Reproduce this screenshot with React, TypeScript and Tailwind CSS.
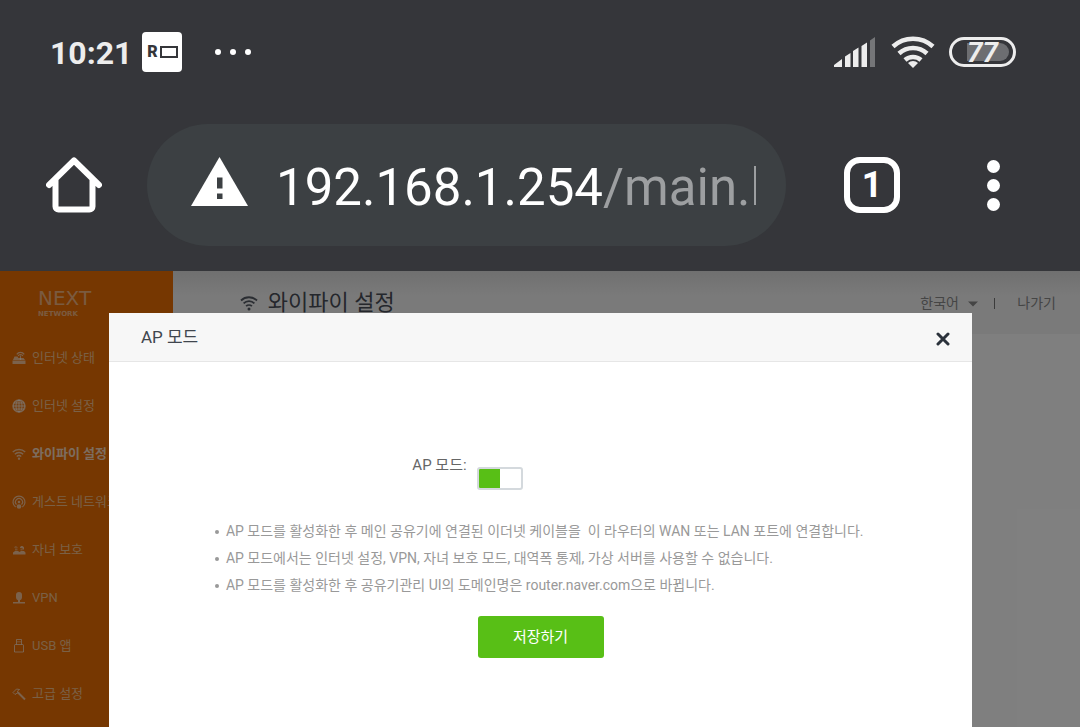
import { useState } from "react";
import type { ReactNode } from "react";

const menu: { label: string; icon: ReactNode; active?: boolean }[] = [
  { label: "인터넷 상태", icon: <RouterIcon /> },
  { label: "인터넷 설정", icon: <GlobeIcon /> },
  { label: "와이파이 설정", icon: <WifiIcon className="size-3.5" />, active: true },
  { label: "게스트 네트워크", icon: <GuestIcon /> },
  { label: "자녀 보호", icon: <FamilyIcon /> },
  { label: "VPN", icon: <VpnIcon /> },
  { label: "USB 앱", icon: <UsbIcon /> },
  { label: "고급 설정", icon: <HammerIcon /> },
];

const notes = [
  "AP 모드를 활성화한 후 메인 공유기에 연결된 이더넷 케이블을\u00a0 이 라우터의 WAN 또는 LAN 포트에 연결합니다.",
  "AP 모드에서는 인터넷 설정, VPN, 자녀 보호 모드, 대역폭 통제, 가상 서버를 사용할 수 없습니다.",
  "AP 모드를 활성화한 후 공유기관리 UI의 도메인명은 router.naver.com으로 바뀝니다.",
];

function RouterIcon() {
  return (
    <svg viewBox="0 0 14 14" className="size-3.5" fill="none" stroke="currentColor">
      <path d="M.5 9.500h13V13H.5z" fill="currentColor" stroke="none" />
      <path d="M8.500 9V4.500M6.200 5a2.500 2.500 0 0 1 4.600 0M4.800 3.400a4.300 4.300 0 0 1 7.400 0" strokeWidth="1.200" />
      <path d="M1 9 2.500 5.500h3L6.500 7h5L13 9z" fill="currentColor" stroke="none" />
    </svg>
  );
}

function GlobeIcon() {
  return (
    <svg viewBox="0 0 14 14" className="size-3.5" fill="none" stroke="currentColor">
      <circle cx="7" cy="7" r="6" strokeWidth="1.5" fill="currentColor" fillOpacity=".25" />
      <ellipse cx="7" cy="7" rx="3" ry="6" />
      <path d="M7 1v12M1 7h12M2 4h10M2 10h10" />
    </svg>
  );
}

function WifiIcon({ className }: { className: string }) {
  return (
    <svg viewBox="0 0 18 18" className={className} fill="none" stroke="currentColor" strokeWidth="1.800">
      <path d="M1 6.500a11.500 11.500 0 0 1 16 0M3.600 9.400a7.600 7.600 0 0 1 10.800 0M6.100 12.200a4.200 4.200 0 0 1 5.800 0" />
      <circle cx="9" cy="15" r="1.500" fill="currentColor" stroke="none" />
    </svg>
  );
}

function GuestIcon() {
  return (
    <svg viewBox="0 0 14 14" className="size-3.5" fill="none" stroke="currentColor">
      <path d="M3.600 12a6 6 0 1 1 6.800 0M4.500 9.500a3.500 3.500 0 1 1 5 0" strokeWidth="1.200" />
      <circle cx="7" cy="7" r="1.300" fill="currentColor" stroke="none" />
      <circle cx="7" cy="11.500" r="2.300" fill="currentColor" stroke="none" />
    </svg>
  );
}

function FamilyIcon() {
  return (
    <svg viewBox="0 0 14 14" className="size-3.5" fill="currentColor">
      <path d="M2 4.500C2.500 3 5 3 6 4.500H2zM8 4.500C8.500 2.500 11 2.500 12 4.500v2h-1.500V5H8z" />
      <path d="M1 11.500V9.500L3 8h3l1.500 1L9 8h3l1.500 1.500v2z" />
      <path d="M3 5.500h2.500v2H3zM8.500 5.500h2v2h-2z" opacity=".6" />
    </svg>
  );
}

function VpnIcon() {
  return (
    <svg viewBox="0 0 14 14" className="size-3.5" fill="currentColor">
      <path d="M7 1a3 3 0 0 1 3 3v2.500a3 3 0 0 1-2 2.800V11h5v1.500H1V11h5V9.300a3 3 0 0 1-2-2.800V4a3 3 0 0 1 3-3z" />
    </svg>
  );
}

function UsbIcon() {
  return (
    <svg viewBox="0 0 14 14" className="size-3.5" fill="none" stroke="currentColor">
      <path d="M4.500 5.500v-5h5v5M2.500 6.500a1 1 0 0 1 1-1h7a1 1 0 0 1 1 1V13h-9zM6 2v1.500M8 2v1.500" />
    </svg>
  );
}

function HammerIcon() {
  return (
    <svg viewBox="0 0 14 14" className="size-3.5" fill="none" stroke="currentColor">
      <path d="M1 5.500 4.500 2 7.500 2.500 5.500 4 6 5.500 3 7.500z" />
      <path d="m6 5.500 7 7" strokeWidth="2" />
    </svg>
  );
}

function StatusBar() {
  return (
    <div className="flex h-[104px] items-center pr-16 pl-[50px] text-[#ededed]">
      <span className="pt-0.5 text-[32px] leading-10 font-bold">10:21</span>
      <span className="ml-[10px] flex size-10 items-center justify-center gap-0.5 rounded bg-white text-[#35363a]">
        <span className="text-base font-black">R</span>
        <span className="h-3 w-[18px] border-2 border-[#35363a]" />
      </span>
      <span className="ml-[33px] flex gap-[9px]">
        <i className="size-1.5 rounded-full bg-white" />
        <i className="size-1.5 rounded-full bg-white" />
        <i className="size-1.5 rounded-full bg-white" />
      </span>
      <svg viewBox="0 0 42 30" className="ml-auto h-[30px] w-[42px]" fill="currentColor">
        <path d="M0 30v-2l8-6v8zM11 30V19.500l5.500-3.500v14zM19 30V14l5.500-3.500V30zM27.500 30V9L33 5.500V30z" />
        <path d="M36 30V3.500L41 0v30z" opacity=".35" />
      </svg>
      <svg viewBox="0 0 44 32" className="ml-[15px] h-8 w-11" fill="none" stroke="currentColor" strokeWidth="4.500">
        <path d="M2 10.500a29.500 29.500 0 0 1 40 0M8 17.500a20.500 20.500 0 0 1 28 0M14 24a12 12 0 0 1 16 0" />
        <path d="M22 32 17 27a7 7 0 0 1 10 0z" fill="currentColor" stroke="none" />
      </svg>
      <span className="ml-[14px] flex h-[30px] w-[67px] items-center rounded-full border-3 border-current p-1">
        <span className="ml-[11px] flex h-[18px] flex-1 items-center rounded-r-full bg-[#6d6e71] pt-0.5">
          <span className="text-[28px] font-bold italic">77</span>
        </span>
      </span>
    </div>
  );
}

function Toolbar() {
  return (
    <div className="flex items-center pt-5 pr-20 pb-[25px] pl-[46px] text-white">
      <button type="button" aria-label="Home" className="shrink-0">
        <svg viewBox="0 0 56 56" className="size-14" fill="none" stroke="currentColor" strokeWidth="6" strokeLinecap="round" strokeLinejoin="round">
          <path d="M3 28 28 3.500 53 28M9.500 23v26.500a3 3 0 0 0 3 3h31a3 3 0 0 0 3-3V23" />
        </svg>
      </button>
      <div className="ml-[45px] flex h-[122px] min-w-0 flex-1 items-center rounded-full bg-[#3c4043] pr-[30px] pl-11">
        <svg viewBox="0 0 57 49" className="mb-2 h-[49px] w-[57px] shrink-0">
          <path d="M28.500 0 57 49H0z" fill="currentColor" />
          <path d="M26 20.500h5.500v11H26zM26 36.500h5.500V42H26z" fill="#3c4043" />
        </svg>
        <span className="ml-7 min-w-0 flex-1 overflow-hidden pt-1.5 text-[51px] leading-[64px] whitespace-nowrap">
          192.168.1.254<span className="text-[#9d9fa1]">/main.html</span>
        </span>
      </div>
      <button type="button" aria-label="Tabs" className="ml-[58px] flex size-14 shrink-0 items-center justify-center rounded-2xl border-6 border-white text-4xl font-bold">
        1
      </button>
      <button type="button" aria-label="Menu" className="ml-[87px] flex shrink-0 flex-col gap-1.5">
        <i className="size-[13px] rounded-full bg-white" />
        <i className="size-[13px] rounded-full bg-white" />
        <i className="size-[13px] rounded-full bg-white" />
      </button>
    </div>
  );
}

function Sidebar() {
  return (
    <aside className="w-[16%] shrink-0 bg-[#ec6e02]">
      <a href="#home" className="flex h-[63px] flex-col pt-[15px] pl-[38px] font-['DejaVu_Sans',sans-serif] text-white/50">
        <span className="text-[20px] leading-6">NEXT</span>
        <span className="text-[7px] leading-2 font-bold">NETWORK</span>
      </a>
      <nav>
        {menu.map((item) => (
          <a
            key={item.label}
            href="#menu"
            className={
              item.active
                ? "flex h-12 items-center gap-1.5 pl-3 text-[13px] font-bold whitespace-nowrap text-white/75"
                : "flex h-12 items-center gap-1.5 pl-3 text-[13px] whitespace-nowrap text-[#f5c08c]"
            }
          >
            <span className="text-white/60">{item.icon}</span>
            {item.label}
          </a>
        ))}
      </nav>
    </aside>
  );
}

function ApModal() {
  const [enabled, setEnabled] = useState(true);

  return (
    <div role="dialog" aria-labelledby="ap-title" className="flex w-4/5 flex-col bg-white">
      <div className="flex h-[49px] items-center justify-between border-b border-[#e6e6e6] bg-[#f7f7f7] pr-[22px] pl-8 text-[#40464e]">
        <h2 id="ap-title" className="pt-0.5 text-[17px]">AP 모드</h2>
        <button type="button" aria-label="닫기" className="pt-1">
          <svg viewBox="0 0 14 14" className="size-3.5" stroke="#2b323b" strokeWidth="3" strokeLinecap="round">
            <path d="m2 2 10 10M12 2 2 12" />
          </svg>
        </button>
      </div>
      <div className="flex items-start pt-[91px]">
        <label htmlFor="ap-mode" className="w-5/12 pr-0.5 text-right text-[15px] leading-6 text-[#666]">
          AP 모드:
        </label>
        <span className="relative mt-3.5 ml-2 flex h-[23px] w-[46px] overflow-hidden rounded-[3px] border-2 border-[#d4d9dd]">
          <input
            id="ap-mode"
            type="checkbox"
            checked={enabled}
            onChange={(e) => setEnabled(e.target.checked)}
            className="peer absolute inset-0 cursor-pointer appearance-none"
          />
          <span className="w-[21px] bg-[#58bf16] peer-[:not(:checked)]:ml-auto peer-[:not(:checked)]:bg-gray-300" />
        </span>
      </div>
      <ul className="pt-7 pl-[106px] text-[14px] leading-[27px] text-[#999]">
        {notes.map((note) => (
          <li key={note} className="flex items-center gap-[7px] whitespace-nowrap">
            <i className="size-1 rounded-full bg-[#999]" />
            {note}
          </li>
        ))}
      </ul>
      <button type="button" className="mx-auto mt-[17px] h-[42px] w-[126px] rounded-[3px] bg-[#58bf16] text-[15px] text-white">
        저장하기
      </button>
    </div>
  );
}

export default function App() {
  return (
    <div className="flex h-screen flex-col overflow-hidden bg-[#35363a] font-[Roboto,'Noto_Sans_CJK_KR',sans-serif]">
      <StatusBar />
      <Toolbar />
      <div className="relative flex min-h-0 flex-1 overflow-hidden bg-white">
        <Sidebar />
        <main className="flex-1">
          <header className="flex h-[63px] items-center bg-linear-to-b from-[#e0e0e0] to-[#f5f5f5] to-40% pr-6 pl-[67px]">
            <WifiIcon className="size-[18px] text-[#555b65]" />
            <h1 className="ml-[10px] text-[22px] text-[#4a4f59]">와이파이 설정</h1>
            <div className="ml-auto flex items-center pt-0.5 text-[14px] text-[#8a8a8a]">
              <label className="flex items-center gap-[9px]">
                <select aria-label="언어" className="appearance-none">
                  <option>한국어</option>
                </select>
                <svg viewBox="0 0 10 6" className="h-1.5 w-2.5" fill="currentColor">
                  <path d="M0 .500h10l-5 5z" />
                </svg>
              </label>
              <span className="mr-[22px] ml-4 h-[11px] w-px bg-[#777]" />
              <a href="#logout">나가기</a>
            </div>
          </header>
        </main>
        <div className="absolute inset-0 flex justify-center bg-black/50 pt-[42px] pl-px">
          <ApModal />
        </div>
      </div>
    </div>
  );
}
